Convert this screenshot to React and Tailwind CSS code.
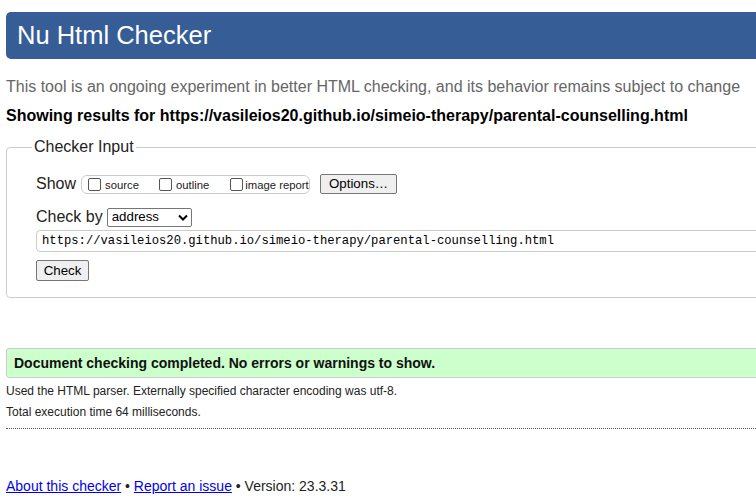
export default function App() {
  return (
    <div className="w-[756px] h-[504px] overflow-hidden bg-white text-black" style={{ fontFamily: '"Liberation Sans", Arial, sans-serif' }}>
      <div className="w-[900px] pl-[6px] pt-[12px]">
        <div className="h-[47px] bg-[#365d95] rounded-[5px] flex items-center pl-[11px]">
          <h1 className="text-white text-[25.5px] leading-none">Nu Html Checker</h1>
        </div>
        <p className="mt-[18px] text-[16px] leading-[20px] text-[#666]">This tool is an ongoing experiment in better HTML checking, and its behavior remains subject to change</p>
        <p className="mt-[9px] text-[16px] leading-[20px] font-bold">Showing results for https://vasileios20.github.io/simeio-therapy/parental-counselling.html</p>
        <fieldset className="mt-[12px] border border-[#ccc] rounded-[4px] pl-[29px] pr-2 h-[160px]">
          <legend className="ml-[-4px] px-[2px] text-[16px] leading-[18px] text-[#222]">Checker Input</legend>
          <div className="mt-[18px] flex items-center h-[20px]">
            <span className="text-[16px] text-[#222]">Show</span>
            <div className="ml-[5px] h-[19px] w-[229px] border border-[#ccc] rounded-[6px] flex items-center pl-[6px] text-[11.3px] text-[#222] whitespace-nowrap">
              <span className="w-[13px] h-[13px] border border-[#555] rounded-[2px] bg-white shrink-0"></span>
              <span className="ml-[4px] mt-[2px]">source</span>
              <span className="ml-[20px] w-[13px] h-[13px] border border-[#555] rounded-[2px] bg-white shrink-0"></span>
              <span className="ml-[4px] mt-[2px]">outline</span>
              <span className="ml-[21px] w-[13px] h-[13px] border border-[#555] rounded-[2px] bg-white shrink-0"></span>
              <span className="ml-[2px] mt-[2px]">image report</span>
            </div>
            <div className="ml-[10px] h-[20px] w-[77px] border border-[#767676] rounded-[2px] bg-[#efefef] flex items-center justify-center text-[13.3px] text-black">Options…</div>
          </div>
          <div className="mt-[13px] flex items-center h-[20px]">
            <span className="text-[16px] text-[#222]">Check by</span>
            <div className="ml-[4px] h-[19px] w-[85px] border border-[#767676] rounded-[2px] bg-white flex items-center pl-[4px] pr-[3px] justify-between text-[13.3px]">
              <span>address</span>
              <svg width="10" height="7" viewBox="0 0 10 7"><path d="M1 1.5 L5 5.5 L9 1.5" stroke="#000" strokeWidth="2" fill="none" /></svg>
            </div>
          </div>
          <div className="mt-[3px] h-[22px] w-[900px] border border-[#ccc] rounded-[4px] flex items-center pl-[5px] text-[12.2px] text-black" style={{ fontFamily: '"Liberation Mono", "Courier New", monospace' }}>https://vasileios20.github.io/simeio-therapy/parental-counselling.html</div>
          <div className="mt-[8px] h-[21px] w-[53px] border border-[#767676] rounded-[2px] bg-[#efefef] flex items-center justify-center text-[13.3px]">Check</div>
        </fieldset>
        <div className="mt-[50px] h-[30px] border border-[#ccc] rounded-[3px] bg-[#ccffcc] flex items-center pl-[7px] text-[14px] font-bold text-[#111]">Document checking completed. No errors or warnings to show.</div>
        <p className="mt-[5px] text-[12px] leading-[16px] text-[#222]">Used the HTML parser. Externally specified character encoding was utf-8.</p>
        <p className="mt-[5px] text-[12px] leading-[16px] text-[#222]">Total execution time 64 milliseconds.</p>
        <div className="mt-[8px] border-t border-dotted border-[#555]"></div>
        <p className="mt-[48px] text-[14px] leading-[18px] text-[#222]">
          <a className="text-[#00e] underline">About this checker</a> • <a className="text-[#00e] underline">Report an issue</a> • Version: 23.3.31
        </p>
      </div>
    </div>
  );
}
